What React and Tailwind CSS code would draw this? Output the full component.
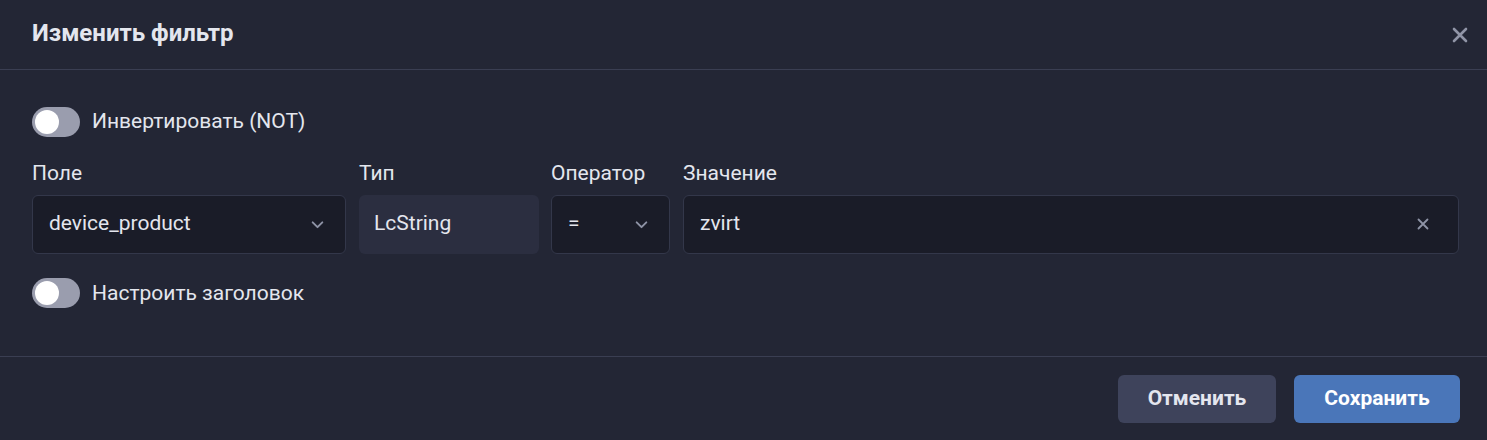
import React from "react";

const Chevron = () => (
  <svg width="15" height="15" viewBox="0 0 14 14" fill="none" stroke="#8e93a6" strokeWidth="1.8" strokeLinecap="round" strokeLinejoin="round">
    <path d="M2.5 5l4.5 4.5L11.5 5" />
  </svg>
);

const XIcon = ({ size = 16, color = "#8e93a6", sw = 2.2 }) => (
  <svg width={size} height={size} viewBox="0 0 16 16" fill="none" stroke={color} strokeWidth={sw} strokeLinecap="round">
    <path d="M2 2l12 12M14 2L2 14" />
  </svg>
);

const Toggle = ({ label }) => (
  <div className="flex items-center gap-3">
    <div className="w-12 h-[30px] rounded-full bg-[#9a9dae] flex items-center pl-[3px]">
      <div className="w-6 h-6 rounded-full bg-white" />
    </div>
    <span className="text-[21px] text-[#e4e6ee]">{label}</span>
  </div>
);

export default function App() {
  return (
    <div className="w-[1487px] h-[440px] bg-[#232635] font-['Roboto',sans-serif] flex flex-col">
      <div className="h-[70px] border-b border-[#3a3e52] flex items-center justify-between pl-8 pr-[19px] shrink-0">
        <h1 className="text-[24px] font-bold text-[#e4e6ee] -mt-[4px]">Изменить фильтр</h1>
        <XIcon size={16} color="#9094a6" sw={2.6} />
      </div>
      <div className="flex-1 pl-8 pr-[28px] pt-9 border-b border-[#3a3e52]">
        <Toggle label="Инвертировать (NOT)" />
        <div className="flex gap-3 mt-6">
          <div className="w-[314px] flex flex-col gap-2">
            <label className="text-[21px] text-[#e4e6ee] h-[25px] leading-[23px]">Поле</label>
            <div className="h-[59px] rounded-md bg-[#1a1c28] border border-[#33374a] flex items-center justify-between pl-4 pr-5">
              <span className="text-[21px] text-[#e4e6ee]">device_product</span>
              <Chevron />
            </div>
          </div>
          <div className="w-[180px] flex flex-col gap-2 ml-px">
            <label className="text-[21px] text-[#e4e6ee] h-[25px] leading-[23px]">Тип</label>
            <div className="h-[59px] rounded-md bg-[#2b2e40] flex items-center pl-[15px]">
              <span className="text-[21px] text-[#e4e6ee]">LcString</span>
            </div>
          </div>
          <div className="w-[119px] flex flex-col gap-2">
            <label className="text-[21px] text-[#e4e6ee] h-[25px] leading-[23px]">Оператор</label>
            <div className="h-[59px] rounded-md bg-[#1a1c28] border border-[#33374a] flex items-center justify-between pl-4 pr-5">
              <span className="text-[21px] text-[#e4e6ee]">=</span>
              <Chevron />
            </div>
          </div>
          <div className="flex-1 flex flex-col gap-2 ml-px">
            <label className="text-[21px] text-[#e4e6ee] h-[25px] leading-[23px]">Значение</label>
            <div className="h-[59px] rounded-md bg-[#1a1c28] border border-[#33374a] flex items-center justify-between pl-4 pr-[29px]">
              <span className="text-[21px] text-[#e4e6ee]">zvirt</span>
              <XIcon size={12} color="#8e93a6" sw={2.4} />
            </div>
          </div>
        </div>
        <div className="mt-6">
          <Toggle label="Настроить заголовок" />
        </div>
      </div>
      <div className="h-[83px] shrink-0 flex items-start justify-end gap-[18px] pt-[18px] pr-[27px]">
        <button className="w-[158px] h-12 rounded-md bg-[#3e435b] text-[21px] font-bold text-[#e4e6ee]">Отменить</button>
        <button className="w-[166px] h-12 rounded-md bg-[#4a76b9] text-[21px] font-bold text-white">Сохранить</button>
      </div>
    </div>
  );
}
